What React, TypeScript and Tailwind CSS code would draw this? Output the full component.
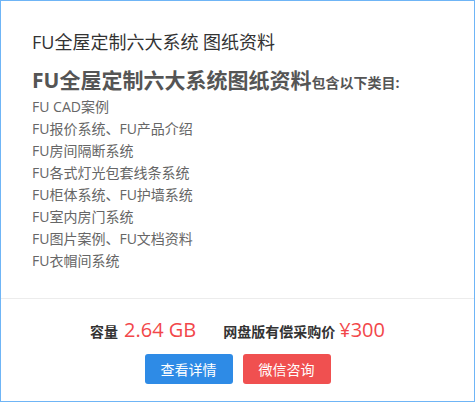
export default function App() {
  const items = [
    "FU CAD案例",
    "FU报价系统、FU产品介绍",
    "FU房间隔断系统",
    "FU各式灯光包套线条系统",
    "FU柜体系统、FU护墙系统",
    "FU室内房门系统",
    "FU图片案例、FU文档资料",
    "FU衣帽间系统",
  ];

  return (
    <div className="w-[475px] h-[402px] bg-white border border-[#6fb5f6] flex flex-col font-['Open_Sans','Noto_Sans_CJK_SC',sans-serif]">
      {/* Description */}
      <div className="pl-[31px] pt-[29px] pb-[26px]">
        <h3 className="text-[18px] leading-[24px] text-[#333]">
          FU全屋定制六大系统 图纸资料
        </h3>

        <div className="mt-[12px] leading-[28px] text-[#555] font-bold">
          <span className="text-[21px]">FU全屋定制六大系统图纸资料</span>
          <span className="text-[14px]">包含以下类目:</span>
        </div>

        <ul className="-mt-[1px] text-[14px] leading-[22px] text-[#666]">
          {items.map((item) => (
            <li key={item}>{item}</li>
          ))}
        </ul>
      </div>

      {/* Price + actions */}
      <div className="border-t border-[#ececec] pt-[17px] flex flex-col items-center">
        <div className="flex items-baseline leading-[28px]">
          <span className="text-[14px] font-bold text-[#333]">容量</span>
          <span className="ml-[6px] text-[20px] text-[#f2474a]">2.64 GB</span>
          <span className="ml-[27px] text-[14px] font-bold text-[#333]">网盘版有偿采购价</span>
          <span className="ml-[4px] text-[20px] text-[#f2474a]">¥300</span>
        </div>

        <div className="mt-[8px] flex gap-[10px]">
          <button className="w-[88px] h-[30px] rounded-[3px] bg-[#2e8be6] text-white text-[14px]">
            查看详情
          </button>
          <button className="w-[88px] h-[30px] rounded-[3px] bg-[#f05050] text-white text-[14px]">
            微信咨询
          </button>
        </div>
      </div>
    </div>
  );
}
